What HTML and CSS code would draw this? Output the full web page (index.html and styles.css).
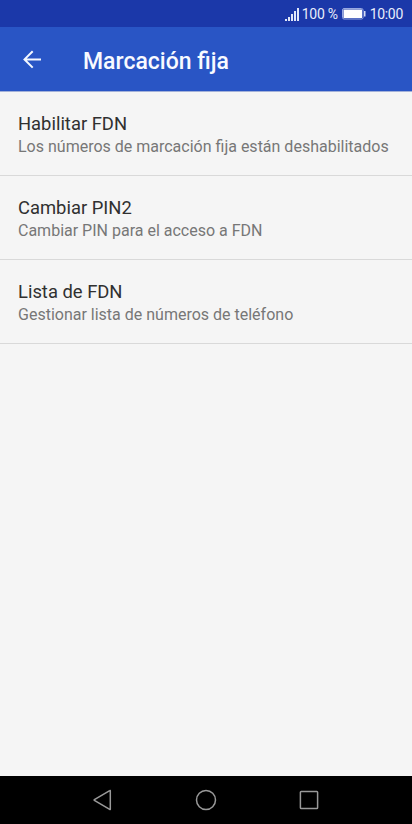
FILE: index.html
```
<!DOCTYPE html>
<html lang="es">
<head>
<meta charset="utf-8">
<meta name="viewport" content="width=device-width, initial-scale=1">
<title>Marcación fija</title>
<link rel="stylesheet" href="styles.css">
</head>
<body>
<div class="status">
  <svg class="signal" width="14" height="13" viewBox="0 0 14 13" fill="#e0e6f8"><path d="M0 11h2v2H0zM3 9h2v4H3zM6 6h2v7H6zM9 3h2v10H9zM12 0h2v13H12z"/></svg>
  <span class="percent">100 %</span>
  <svg class="battery" width="24" height="12" viewBox="0 0 24 12"><rect x=".5" y=".5" width="20.500" height="10.500" rx="1.500" fill="none" stroke="#98a8e0"/><rect x="1.500" y="1.500" width="18.500" height="8.500" fill="#fff"/><path d="M22 3h1.500v5.500H22z" fill="#d5dcf5"/></svg>
  <span class="clock">10:00</span>
</div>
<header class="appbar">
  <svg class="back" width="20" height="20" viewBox="0 0 20 20" fill="none" stroke="#f4f8ff" stroke-width="2"><path d="M19 10.400H2M10.700 2.200L2.500 10.400l8.200 8.200"/></svg>
  <h1 class="title">Marcación fija</h1>
</header>
<main class="list">
  <section class="item"><h2 class="name">Habilitar FDN</h2><p class="summary">Los números de marcación fija están deshabilitados</p></section>
  <section class="item"><h2 class="name">Cambiar PIN2</h2><p class="summary">Cambiar PIN para el acceso a FDN</p></section>
  <section class="item"><h2 class="name">Lista de FDN</h2><p class="summary">Gestionar lista de números de teléfono</p></section>
</main>
<nav class="navbar">
  <svg width="22" height="22" viewBox="0 0 22 22"><path d="M18.300 1.800v18.400Q18.300 20.800 17.700 20.400L2.400 11.500Q1.800 11 2.400 10.500L17.700 1.600Q18.300 1.200 18.300 1.800z"/></svg>
  <svg width="22" height="22" viewBox="0 0 22 22"><circle cx="11" cy="11" r="9.500"/></svg>
  <svg width="22" height="22" viewBox="0 0 22 22"><rect x="2.400" y="2.400" width="17.200" height="17.200" rx=".8"/></svg>
</nav>
</body>
</html>
```
FILE: styles.css
```
* { box-sizing: border-box; }
body {
  margin: 0;
  height: 824px;
  display: flex;
  flex-direction: column;
  overflow: hidden;
  background: #f5f5f5;
  font-family: Roboto, "Liberation Sans", sans-serif;
}
.status {
  height: 27px;
  flex: none;
  display: flex;
  align-items: center;
  justify-content: flex-end;
  padding: 1px 9px 0 0;
  background: #1b38a9;
  color: #e8edfb;
  font-size: 14px;
  letter-spacing: -.3px;
  line-height: 16px;
  white-space: nowrap;
}
.percent { margin: 0 4px 0 3px; }
.clock { margin-left: 4px; }
.appbar {
  height: 65px;
  flex: none;
  display: flex;
  align-items: center;
  padding: 1px 0 0 22px;
  background: #2955c5;
  border-bottom: 1px solid #a3b1d9;
}
.back { margin-top: -1px; }
.title {
  margin: 4px 0 0 41px;
  color: #f8faff;
  font-size: 23px;
  font-weight: 500;
  line-height: 28px;
}
.list { flex: 1; }
.item {
  height: 84px;
  padding: 20px 18px 0;
  border-bottom: 1px solid #d9d9d9;
}
.name {
  margin: 0;
  color: #303030;
  font-size: 18.400px;
  font-weight: 400;
  line-height: 23px;
}
.summary {
  margin: 0;
  color: #777;
  font-size: 16px;
  line-height: 24px;
  white-space: nowrap;
}
.navbar {
  height: 48px;
  flex: none;
  display: flex;
  align-items: center;
  justify-content: center;
  gap: 81px;
  background: #000;
  fill: none;
  stroke: #999;
  stroke-width: 1.5;
}
```
